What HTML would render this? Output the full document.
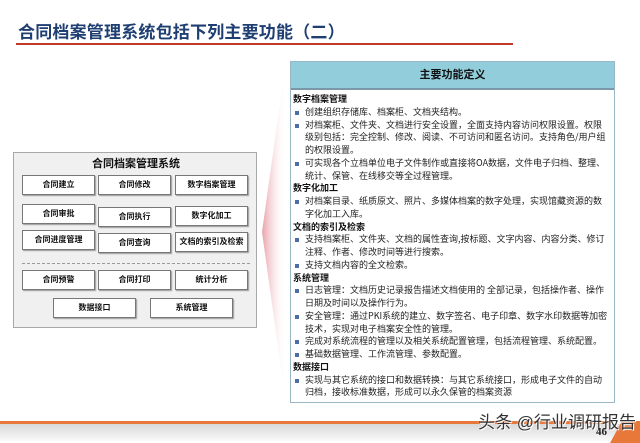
<!DOCTYPE html>
<html><head><meta charset="utf-8"><style>
*{margin:0;padding:0;box-sizing:border-box}
body{width:640px;height:443px;overflow:hidden;background:#fff;position:relative;font-family:"Liberation Sans","Noto Sans CJK SC",sans-serif;}
.title{position:absolute;left:18px;top:18px;font-size:17px;font-weight:bold;color:#1f3f73;letter-spacing:0.2px}
.rline{position:absolute;left:16px;top:43px;width:497px;height:2px;background:#c0392b}
.panel{position:absolute;left:290px;top:61px;width:325px;height:342px;border:1px solid #9bb6c6;background:#fff}
.ph{height:28px;background:#92cddc;border-bottom:2px solid #7a98a8;text-align:center;font-size:11px;font-weight:bold;line-height:27px;color:#111}
.pc{padding:3px 4px 0 2px;font-family:"Noto Sans CJK SC","Liberation Sans",sans-serif;font-size:9px;line-height:12.75px;color:#222}
.h{font-weight:bold;color:#111}
.li{position:relative;padding-left:12px}
.li:before{content:"";position:absolute;left:2px;top:5px;width:4px;height:4px;background:#4a6fa5}
.lbox{position:absolute;left:13px;top:152px;width:244px;height:176px;background:#f0f0f0;border:1px solid #a8a8a8}
.lt{position:absolute;left:0;width:244px;top:2px;text-align:center;font-size:11px;font-weight:bold;color:#111}
.b{position:absolute;height:20px;background:#fff;border:1px solid #777;box-shadow:1px 1px 1px #999;font-size:8px;font-weight:bold;text-align:center;line-height:18px;color:#111}
.dash{position:absolute;left:8px;top:110px;width:228px;border-top:1px dashed #999}
.ob{position:absolute;left:0;top:421px;width:610px;height:3px;background:#e8773a}
.gb{position:absolute;left:0;top:424px;width:640px;height:17px;background:linear-gradient(#d8d8d8,#fafafa)}
.wm{position:absolute;left:478px;top:408px;font-size:17px;color:#333;text-shadow:0 0 2px #fff,1px 1px 0 #fff}
.pn{position:absolute;left:596px;top:426px;font-size:11px;font-weight:bold;color:#222;font-family:"Liberation Serif",serif}
</style></head><body>
<div class="title">合同档案管理系统包括下列主要功能（二）</div>
<div class="rline"></div>
<svg style="position:absolute;left:262px;top:60px" width="26" height="345"><defs><linearGradient id="g" x1="0" x2="1"><stop offset="0" stop-color="#e8a0a8"/><stop offset="1" stop-color="#fff" stop-opacity="0"/></linearGradient></defs><polygon points="0,172 24,0 24,345" fill="url(#g)"/></svg>
<div class="lbox">
<div class="lt">合同档案管理系统</div>
<div class="b" style="left:8px;top:22px;width:73px">合同建立</div>
<div class="b" style="left:84px;top:22px;width:73px">合同修改</div>
<div class="b" style="left:161px;top:22px;width:73px">数字档案管理</div>
<div class="b" style="left:8px;top:51px;width:73px">合同审批</div>
<div class="b" style="left:84px;top:54px;width:73px">合同执行</div>
<div class="b" style="left:161px;top:53px;width:73px">数字化加工</div>
<div class="b" style="left:8px;top:77px;width:73px">合同进度管理</div>
<div class="b" style="left:84px;top:80px;width:73px">合同查询</div>
<div class="b" style="left:161px;top:79px;width:73px">文档的索引及检索</div>
<div class="dash"></div>
<div class="b" style="left:8px;top:117px;width:73px">合同预警</div>
<div class="b" style="left:84px;top:117px;width:73px">合同打印</div>
<div class="b" style="left:161px;top:117px;width:73px">统计分析</div>
<div class="b" style="left:39px;top:145px;width:83px">数据接口</div>
<div class="b" style="left:136px;top:145px;width:83px">系统管理</div>
</div>
<div class="panel">
<div class="ph">主要功能定义</div>
<div class="pc">
<div class="h">数字档案管理</div>
<div class="li">创建组织存储库、档案柜、文档夹结构。</div>
<div class="li">对档案柜、文件夹、文档进行安全设置，全面支持内容访问权限设置。权限级别包括：完全控制、修改、阅读、不可访问和匿名访问。支持角色/用户组的权限设置。</div>
<div class="li">可实现各个立档单位电子文件制作或直接将OA数据，文件电子归档、整理、统计、保管、在线移交等全过程管理。</div>
<div class="h">数字化加工</div>
<div class="li">对档案目录、纸质原文、照片、多媒体档案的数字处理，实现馆藏资源的数字化加工入库。</div>
<div class="h">文档的索引及检索</div>
<div class="li">支持档案柜、文件夹、文档的属性查询,按标题、文字内容、内容分类、修订注释、作者、修改时间等进行搜索。</div>
<div class="li">支持文档内容的全文检索。</div>
<div class="h">系统管理</div>
<div class="li">日志管理：文档历史记录报告描述文档使用的 全部记录，包括操作者、操作日期及时间以及操作行为。</div>
<div class="li">安全管理：通过PKI系统的建立、数字签名、电子印章、数字水印数据等加密技术，实现对电子档案安全性的管理。</div>
<div class="li">完成对系统流程的管理以及相关系统配置管理，包括流程管理、系统配置。</div>
<div class="li">基础数据管理、工作流管理、参数配置。</div>
<div class="h">数据接口</div>
<div class="li">实现与其它系统的接口和数据转换：与其它系统接口，形成电子文件的自动归档，接收标准数据，形成可以永久保管的档案资源</div>
</div>
</div>
<div class="ob"></div>
<div class="gb"></div>
<svg style="position:absolute;left:600px;top:416px" width="40" height="27"><polygon points="10,27 22,5 40,5 40,27" fill="#e8773a"/></svg>
<div class="wm">头条 @行业调研报告</div>
<div class="pn">46</div>
</body></html>
